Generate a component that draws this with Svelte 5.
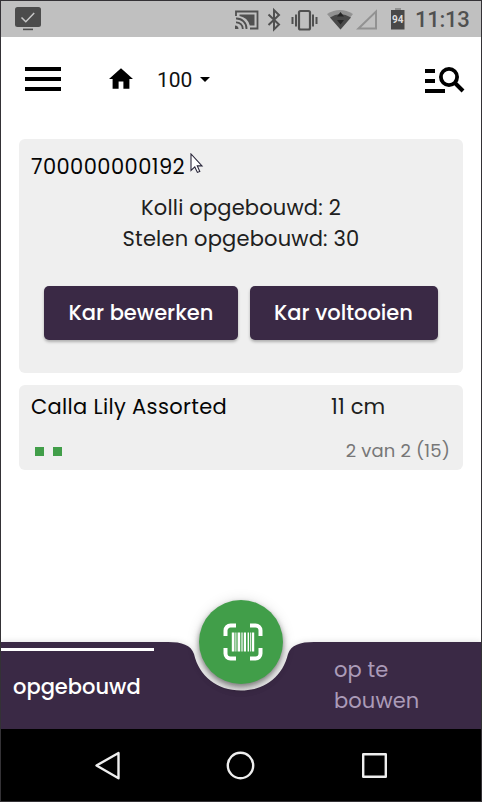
<script>
  const order = { id: '700000000192', kolli: 2, stelen: 30 };
  const product = { name: 'Calla Lily Assorted', size: '11 cm', done: 2, total: 2, pieces: 15 };
  const bars = [[0, 2.6], [3.6, 1], [5.8, 2.6], [9.6, 1.2], [12, 2.2], [15.8, 1.4], [18.4, 1], [20.2, 2.2]];
</script>

<div class="phone">
  <header class="status">
    <svg class="monitor" width="26" height="24" viewBox="0 0 26 24">
      <rect width="26" height="20" rx="2.5" fill="#4c4c4c" />
      <path d="M6.5 10.5l4.3 4.2 8.4-8.6" fill="none" stroke="#c8c8c8" stroke-width="1.5" />
      <path d="M8 22.4h10" stroke="#4c4c4c" stroke-width="1.6" />
    </svg>
    <svg class="signals" width="174" height="26" viewBox="0 0 174 26">
      <g fill="none" stroke="#505050" stroke-width="1.8">
        <path d="M1 8V3.5h21.5v17H15" />
        <path d="M1 10.5a10 10 0 0 1 10.5 10.5M1 14.3a6.5 6.5 0 0 1 6.8 6.7" />
      </g>
      <path d="M4.5 6.5h15v11h-4.7A13 13 0 0 0 4.5 8zM0 17.5a3.5 3.5 0 0 1 3.5 3.5H0z" fill="#505050" />
      <path d="M33.500 6.500l10.500 10L39 21.400V2.100l5 5L33.500 17" fill="none" stroke="#505050" stroke-width="2" />
      <rect x="64" y="3" width="11" height="18.500" rx="1.5" fill="none" stroke="#505050" stroke-width="2.200" />
      <path d="M61 6.500v12M78 6.500v12M57.500 9v7M81.500 9v7" stroke="#505050" stroke-width="2" />
      <path d="M92 6Q105-2 118 6L105.500 21.500z" fill="#929292" />
      <path d="M95 9.500Q105 2.500 116 9.500L105.500 21.500z" fill="#484848" />
      <path d="M105.500 4l3.500 4.500h-7zM105.500 16.500l-3.500-4.500h7z" fill="#262626" />
      <path d="M123.500 20.500L141 3.500v17z" fill="none" stroke="#929292" stroke-width="2" />
      <path d="M160 0h6v2h3.500v19.500H156V2h4z" fill="#484848" />
      <path d="M160 0h6v2h-6z" fill="#929292" />
      <text x="162.800" y="15" text-anchor="middle">94</text>
    </svg>
    <time>11:13</time>
  </header>

  <nav class="toolbar">
    <svg class="menu" width="36" height="24" viewBox="0 0 36 24"><path d="M0 0h36v4H0zM0 10h36v4H0zM0 20h36v4H0z" /></svg>
    <svg class="home" width="24" height="21" viewBox="2 3 20 17"><path d="M10 20v-6h4v6h5v-8h3L12 3 2 12h3v8z" /></svg>
    <span class="location">100</span>
    <svg class="caret" width="10" height="5" viewBox="0 0 10 5"><path d="M0 0h10L5 5z" /></svg>
    <svg class="find" width="40" height="28" viewBox="0 0 40 28">
      <path d="M0 3h10v4H0zM0 13h10v4H0zM0 23h20v4H0z" />
      <circle cx="24" cy="11" r="8.100" fill="none" stroke="#000" stroke-width="3.800" />
      <path d="M29.500 16.500l8.500 8.500" stroke="#000" stroke-width="4" />
    </svg>
  </nav>

  <main>
    <section class="card order">
      <h1>{order.id}</h1>
      <p class="kolli">Kolli opgebouwd: {order.kolli}</p>
      <p class="stelen">Stelen opgebouwd: {order.stelen}</p>
      <div class="actions">
        <button class="edit">Kar bewerken</button>
        <button class="finish">Kar voltooien</button>
      </div>
      <svg class="cursor" width="14" height="21" viewBox="0 0 14 21">
        <path d="M1 1v16.500l3.800-3.600 2.600 5.500 2.400-1-2.500-5.500H12z" fill="#fff" stroke="#29263a" stroke-width="1.100" />
      </svg>
    </section>
    <section class="card product">
      <div class="line">
        <span class="name">{product.name}</span>
        <span class="size">{product.size}</span>
      </div>
      <div class="line progress">
        <div class="dots">{#each Array(product.done) as _}<i></i>{/each}</div>
        <span class="count">{product.done} van {product.total} ({product.pieces})</span>
      </div>
    </section>
  </main>

  <footer class="tabs">
    <svg class="shape" width="480" height="87" viewBox="1 0 480 87">
      <path d="M1 0H168C182 0 191 3 194 12C199 34 217 48.500 241 48.500S283 34 288 12C291 3 300 0 314 0H481V87H1z" fill="#3a2945" />
    </svg>
    <button class="tab active"><span>opgebouwd</span></button>
    <button class="tab pending"><span>op te<br />bouwen</span></button>
    <button class="scan" aria-label="scan">
      <svg width="40" height="38" viewBox="0 0 40 38">
        <path d="M2.500 13V7.500a5 5 0 0 1 5-5H13M27 2.500h5.500a5 5 0 0 1 5 5V13M37.500 25v5.500a5 5 0 0 1-5 5H27M13 35.500H7.500a5 5 0 0 1-5-5V25" fill="none" stroke="#fff" stroke-width="4" />
        {#each bars as [x, w]}<rect x={8.8 + x} y="9.500" width={w} height="19" fill="#fff" />{/each}
      </svg>
    </button>
  </footer>

  <div class="system">
    <svg width="480" height="72" viewBox="1 729 480 72" fill="none" stroke="#eee" stroke-width="2.400" stroke-linejoin="round">
      <path d="M96.500 765.500L118.500 753v25.300z" />
      <circle cx="240.500" cy="765.500" r="12.700" />
      <rect x="363.200" y="754.200" width="22.600" height="22.600" />
    </svg>
  </div>
</div>

<style>
  .phone {
    box-sizing: border-box;
    width: 482px;
    height: 802px;
    border: 1px solid #343236;
    background: #fff;
    display: flex;
    flex-direction: column;
    overflow: hidden;
    font-family: Poppins, Inter, sans-serif;
    font-size: 21px;
    color: #202020;
  }
  svg { display: block; flex: none; }
  span, h1, p, button, time { white-space: nowrap; }
  h1, p { margin: 0; font-weight: 400; }
  button { border: 0; margin: 0; padding: 0; font: inherit; }
  .status { height: 36px; flex: none; background: #c0c0c0; display: flex; }
  .monitor { margin: 6px 0 0 14px; }
  .signals { margin: 7px 0 0 194px; overflow: visible; }
  .signals text { font: 700 10px Roboto, sans-serif; fill: #ddd; }
  time { font: 500 22px/36px Roboto, sans-serif; letter-spacing: -.25px; color: #505050; margin-left: 6px; padding-top: 1px; }
  .toolbar { height: 84px; flex: none; display: flex; align-items: center; }
  .menu { margin-left: 24px; }
  .home { margin: -1px 0 0 47.500px; }
  .location { font: 400 21px/30px Roboto, sans-serif; color: #111; margin-left: 24.500px; width: 36px; padding-top: 1px; }
  .caret { margin: 1px 0 0 7px; }
  .find { margin: 2px 0 0 215px; }
  main { flex: 1; padding: 18px 18px 0; }
  .card { background: #efefef; border-radius: 6px; box-sizing: border-box; position: relative; }
  .order { height: 234px; padding: 12px; }
  h1 { font-size: 21px; line-height: 31px; color: #050505; letter-spacing: .42px; }
  .order p { text-align: center; line-height: 31px; letter-spacing: .18px; }
  .kolli { margin-top: 10px; }
  .cursor { position: absolute; left: 171px; top: 14px; }
  .actions { display: flex; gap: 12px; margin: 32px 0 0 13px; }
  .actions button { height: 54px; border-radius: 5px; background: #3a2945; color: #fff; font-weight: 500; box-shadow: 0 2px 3px #0004; padding-bottom: 2px; }
  .actions .edit { width: 194px; }
  .actions .finish { width: 188px; padding-right: 1px; }
  .product { height: 85px; margin-top: 12px; padding: 6px 12px; }
  .line { display: flex; justify-content: space-between; line-height: 31px; }
  .name { color: #050505; letter-spacing: .34px; }
  .size { width: 120px; letter-spacing: .2px; }
  .progress { margin-top: 14px; align-items: center; line-height: 30px; }
  .dots { display: flex; gap: 9px; padding: 0 0 0 4px; }
  .dots i { width: 9px; height: 9px; background: #419e49; }
  .count { font-size: 18px; letter-spacing: .17px; color: #777; padding-right: 1px; }
  .tabs { height: 87px; flex: none; position: relative; display: flex; justify-content: space-between; }
  .shape { position: absolute; inset: 0; z-index: 0; filter: drop-shadow(0 0 3px #0002); }
  .tab { position: relative; z-index: 2; background: none; color: #fff; text-align: left; line-height: 31px; }
  .active { width: 153px; font-weight: 500; padding: 2px 0 0 12px; }
  .active::before { content: ''; position: absolute; left: 0; top: 6px; width: 153px; height: 3px; background: #fff; }
  .pending { width: 147px; color: #ab9bb8; letter-spacing: .1px; padding-bottom: 2px; }
  .scan { position: absolute; z-index: 1; left: 198px; top: -42px; width: 84px; height: 84px; border-radius: 50%; background: #419e49; display: grid; place-items: center; box-shadow: 0 3px 5px #0005, 0 5px 9px #0003, 0 1px 14px #0002; }
  .scan svg { margin: 0 0 1px 3px; }
  .system { height: 72px; flex: none; background: #000; }
</style>
